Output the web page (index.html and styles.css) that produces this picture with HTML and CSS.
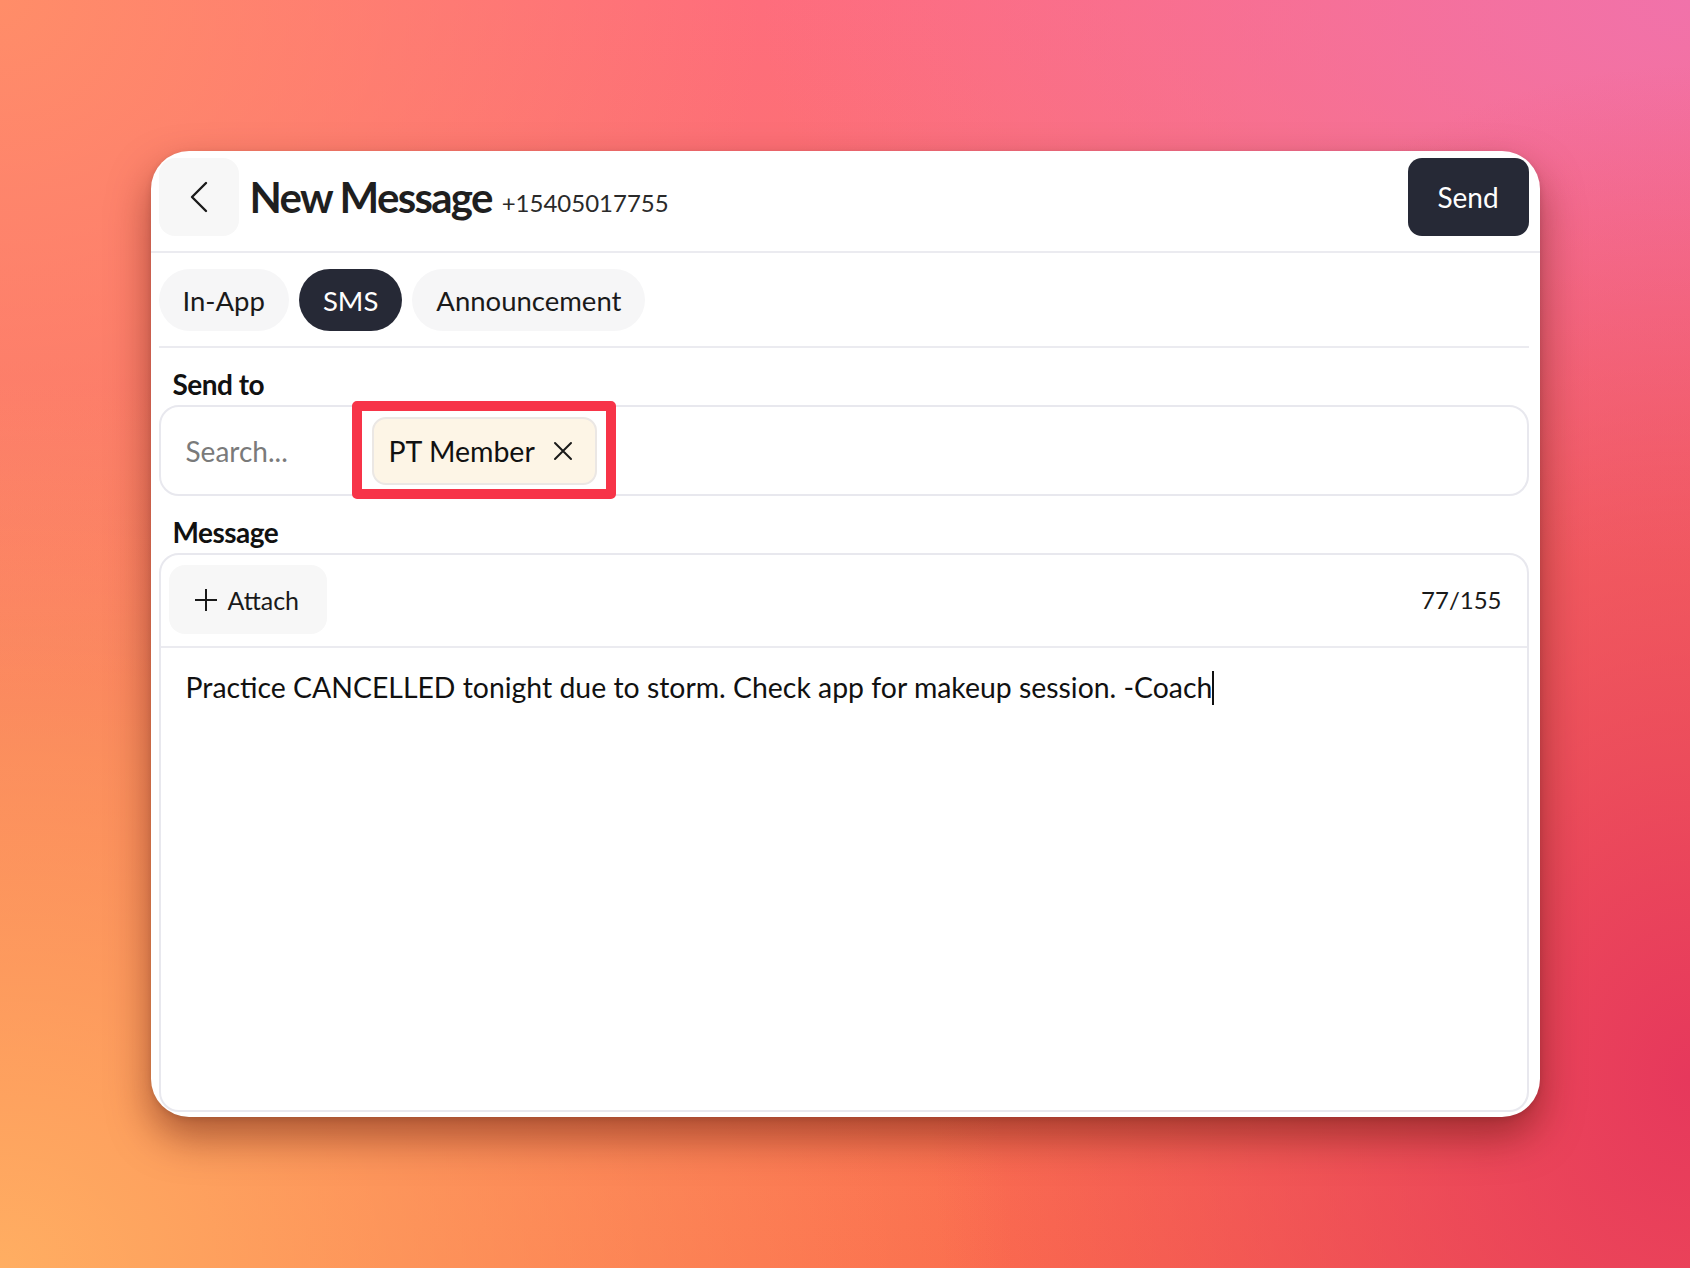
FILE: index.html
```html
<!DOCTYPE html>
<html>
<head>
<meta charset="utf-8">
<link rel="stylesheet" href="styles.css">
</head>
<body>
<div class="card">
  <header class="header">
    <button class="back" aria-label="Back">
      <svg width="18" height="32" viewBox="0 0 18 32"><polyline points="16,2 2,16 16,30" fill="none" stroke="#1a1a1a" stroke-width="2.4" stroke-linecap="round" stroke-linejoin="round"/></svg>
    </button>
    <h1 class="title">New Message</h1>
    <span class="phone">+15405017755</span>
    <button class="send">Send</button>
  </header>
  <div class="body">
    <nav class="tabs">
      <span class="tab">In-App</span>
      <span class="tab active">SMS</span>
      <span class="tab">Announcement</span>
    </nav>
    <label class="label">Send to</label>
    <div class="field">
      <span class="placeholder">Search...</span>
      <span class="chip-wrap">
        <span class="chip">PT Member
          <svg class="x" width="20" height="20" viewBox="0 0 20 20"><path d="M2 2 L18 18 M18 2 L2 18" stroke="#1a1a1a" stroke-width="2" stroke-linecap="round"/></svg>
        </span>
        <span class="highlight"></span>
      </span>
    </div>
    <label class="label label-msg">Message</label>
    <div class="msgbox">
      <div class="toolbar">
        <button class="attach">
          <svg width="24" height="24" viewBox="0 0 24 24"><path d="M12 1 V23 M1 12 H23" stroke="#1a1a1a" stroke-width="2"/></svg>
          <span>Attach</span>
        </button>
        <span class="count">77/155</span>
      </div>
      <div class="text">Practice CANCELLED tonight due to storm. Check app for makeup session. -Coach<span class="caret"></span></div>
    </div>
  </div>
</div>
</body>
</html>
```

FILE: styles.css
```css
* { box-sizing: border-box; }
html, body { margin: 0; padding: 0; }
body {
  width: 1690px;
  height: 1268px;
  display: flex;
  align-items: center;
  justify-content: center;
  font-family: Lato, "Noto Sans", sans-serif;
  color: #1a1a1a;
  background:
    radial-gradient(ellipse 60% 70% at 0% 100%, #ffae62 0%, rgba(255,174,98,0) 100%),
    radial-gradient(ellipse 45% 80% at 100% 85%, #e6385c 0%, rgba(230,56,92,0) 100%),
    radial-gradient(ellipse 55% 45% at 100% 0%, #f172aa 0%, rgba(241,114,170,0) 100%),
    radial-gradient(ellipse 45% 55% at 0% 0%, #ff8d68 0%, rgba(255,141,104,0) 100%),
    linear-gradient(180deg, #fe6d7c 0%, #f9785a 60%, #fb6c4e 100%);
  overflow: hidden;
}
.card {
  width: 1389px;
  height: 966px;
  background: #fff;
  border-radius: 38px;
  box-shadow: 0 20px 40px rgba(90, 20, 10, 0.5), 0 2px 6px rgba(0,0,0,0.12);
  display: flex;
  flex-direction: column;
  overflow: hidden;
}
.header {
  display: flex;
  align-items: flex-start;
  height: 102px;
  padding: 7px 11px 0 8px;
  border-bottom: 2px solid #ebebf0;
}
.back {
  width: 80px;
  height: 78px;
  border: none;
  background: #f7f7f7;
  border-radius: 16px;
  display: flex;
  align-items: center;
  justify-content: center;
  padding: 0;
}
.title {
  margin: 0 0 0 11px;
  font-size: 42px;
  font-weight: 700;
  letter-spacing: -1.7px;
  line-height: 78px;
  color: #1f1f1f;
}
.phone {
  margin-left: 10px;
  font-size: 24px;
  line-height: 78px;
  padding-top: 6px;
  color: #2a2a2a;
}
.send {
  margin-left: auto;
  width: 121px;
  height: 78px;
  border: none;
  border-radius: 14px;
  background: #262936;
  color: #fff;
  font-family: Lato, sans-serif;
  font-size: 28px;
  padding: 0;
}
.body {
  flex: 1;
  display: flex;
  flex-direction: column;
  padding: 0 11px 5px 8px;
}
.tabs {
  display: flex;
  gap: 10px;
  padding: 16px 0 15px;
  border-bottom: 2px solid #ebebf0;
}
.tab {
  height: 62px;
  padding: 0 24px;
  border-radius: 31px;
  background: #f6f6f7;
  font-size: 27.5px;
  display: flex;
  align-items: center;
  color: #1a1a1a;
}
.tab.active {
  background: #262936;
  color: #fff;
}
.label {
  display: block;
  font-size: 28px;
  font-weight: 700;
  letter-spacing: -0.5px;
  padding-left: 14px;
  line-height: 30px;
  margin-top: 21px;
  height: 36px;
  color: #111;
}
.field {
  height: 91px;
  border: 2px solid #e8e8ee;
  border-radius: 20px;
  display: flex;
  align-items: center;
  padding-left: 25px;
}
.placeholder {
  font-size: 28px;
  color: #7a7a7a;
  width: 186px;
}
.chip-wrap {
  position: relative;
  display: inline-flex;
}
.chip {
  display: inline-flex;
  align-items: center;
  height: 68px;
  padding: 0 22px 0 15px;
  background: #fdf5e6;
  border: 2px solid #ebe7e4;
  border-radius: 14px;
  font-size: 28.5px;
  color: #111;
}
.chip .x { margin-left: 18px; }
.highlight {
  position: absolute;
  left: -20px;
  right: -19px;
  top: -16px;
  bottom: -14px;
  border: 10px solid #f73448;
  border-radius: 5px;
  pointer-events: none;
}
.label-msg { margin-top: 21px; height: 36px; }
.msgbox {
  flex: 1;
  border: 2px solid #e8e8ee;
  border-radius: 20px;
  display: flex;
  flex-direction: column;
}
.toolbar {
  display: flex;
  align-items: center;
  justify-content: space-between;
  padding: 10px 25px 12px 8px;
  border-bottom: 2px solid #ebebf0;
}
.attach {
  height: 69px;
  width: 158px;
  border: none;
  border-radius: 16px;
  background: #f7f7f7;
  display: flex;
  align-items: center;
  gap: 10px;
  padding: 0 0 0 25px;
  font-family: Lato, sans-serif;
  font-size: 25px;
  color: #1a1a1a;
}
.count {
  font-size: 24px;
  color: #1a1a1a;
}
.text {
  padding: 19px 25px;
  font-size: 28.4px;
  line-height: 40px;
  color: #111;
}
.caret {
  display: inline-block;
  width: 2px;
  height: 34px;
  background: #111;
  vertical-align: -7px;
}
```
